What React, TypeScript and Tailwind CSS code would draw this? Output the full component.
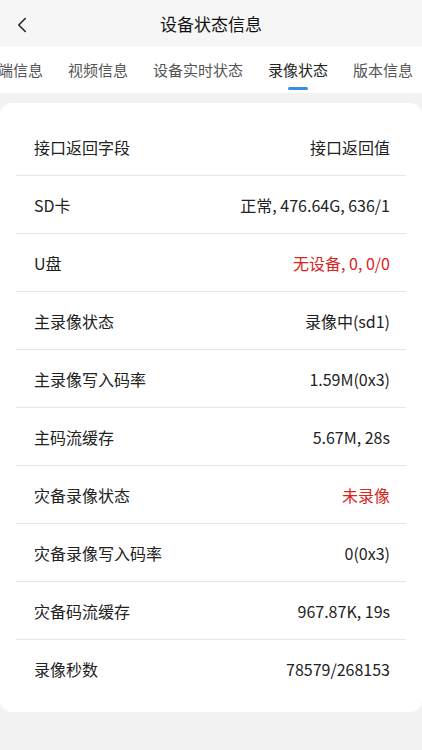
import { ChevronLeft } from "lucide-react";

const TABS = ["终端信息", "视频信息", "设备实时状态", "录像状态", "版本信息"];
const ACTIVE = "录像状态";

type Row = { label: string; value: string; alert?: boolean };

const ROWS: Row[] = [
  { label: "接口返回字段", value: "接口返回值" },
  { label: "SD卡", value: "正常, 476.64G, 636/1" },
  { label: "U盘", value: "无设备, 0, 0/0", alert: true },
  { label: "主录像状态", value: "录像中(sd1)" },
  { label: "主录像写入码率", value: "1.59M(0x3)" },
  { label: "主码流缓存", value: "5.67M, 28s" },
  { label: "灾备录像状态", value: "未录像", alert: true },
  { label: "灾备录像写入码率", value: "0(0x3)" },
  { label: "灾备码流缓存", value: "967.87K, 19s" },
  { label: "录像秒数", value: "78579/268153" },
];

export default function App() {
  return (
    <div
      className="min-h-[750px] w-[422px] overflow-hidden bg-[#f2f2f2] text-[#222]"
      style={{ fontFamily: '"Noto Sans CJK SC", "Noto Sans", sans-serif' }}
    >
      {/* Header */}
      <div className="relative flex h-[47px] items-center justify-center bg-[#f6f6f6]">
        <ChevronLeft
          size={26}
          strokeWidth={1.4}
          className="absolute left-[9px] top-[12px] text-[#222]"
        />
        <h1 className="text-[17px] font-normal text-[#111]">设备状态信息</h1>
      </div>

      {/* Tabs (scrolled so the first tab is partly hidden) */}
      <div className="flex h-[46px] items-stretch overflow-hidden bg-white">
        <div className="-ml-[17px] flex shrink-0 items-stretch gap-[25px]">
          {TABS.map((t) => (
            <div key={t} className="relative flex shrink-0 items-center">
              <span
                className={
                  t === ACTIVE
                    ? "text-[15px] text-[#222]"
                    : "text-[15px] text-[#555]"
                }
              >
                {t}
              </span>
              {t === ACTIVE && (
                <span className="absolute bottom-[3px] left-1/2 h-[3px] w-[20px] -translate-x-1/2 rounded-full bg-[#3b8de0]" />
              )}
            </div>
          ))}
        </div>
      </div>

      {/* Card */}
      <div className="mt-[10px] rounded-[12px] bg-white px-4 pb-[14px] pt-[15px]">
        {ROWS.map((r, i) => (
          <div
            key={r.label}
            className={
              i === ROWS.length - 1
                ? "flex h-[58px] items-center justify-between pl-[18px] pr-[16px]"
                : "flex h-[58px] items-center justify-between border-b border-[#e6e6e6] pl-[18px] pr-[16px]"
            }
          >
            <span className="text-[16px] text-[#222]">{r.label}</span>
            <span
              className={
                r.alert
                  ? "text-[16px] text-[#d9261c]"
                  : "text-[16px] text-[#222]"
              }
            >
              {r.value}
            </span>
          </div>
        ))}
      </div>
    </div>
  );
}
